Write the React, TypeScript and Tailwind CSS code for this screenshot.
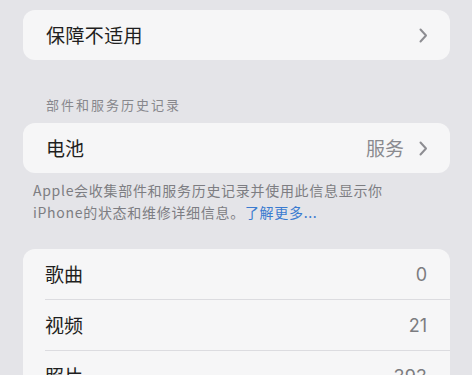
import React from "react";

const Chevron = () => (
  <svg width="9" height="15" viewBox="0 0 9 15" fill="none" className="shrink-0">
    <path d="M1.5 1.5 L7 7.5 L1.5 13.5" stroke="#8d8d92" strokeWidth="2" strokeLinecap="round" strokeLinejoin="round" />
  </svg>
);

export default function App() {
  const font = { fontFamily: '"Noto Sans CJK SC", "Noto Sans", sans-serif' };
  return (
    <div className="w-[472px] h-[375px] overflow-hidden bg-[#e4e4e8] pt-[10px] pl-[23px] pr-[22px]" style={font}>
      <div className="h-[50px] rounded-[12px] bg-[#f6f6f7] flex items-center justify-between pl-[23px] pr-[22px]">
        <span className="text-[19px] tracking-[0.4px] text-[#1f1f21]">保障不适用</span>
        <Chevron />
      </div>

      <div className="pt-[37px] pb-[10px] pl-[23px] text-[13px] leading-[16px] tracking-[2px] text-[#87878c]">
        部件和服务历史记录
      </div>

      <div className="h-[50px] rounded-[12px] bg-[#f6f6f7] flex items-center justify-between pl-[23px] pr-[22px]">
        <span className="text-[19px] text-[#1f1f21]">电池</span>
        <div className="flex items-center gap-[15px]">
          <span className="text-[19px] text-[#8a8a8f]">服务</span>
          <Chevron />
        </div>
      </div>

      <div className="mt-[6px] pl-[10px] text-[14px] leading-[22px] tracking-[0.7px] text-[#7d7d82]">
        Apple会收集部件和服务历史记录并使用此信息显示你
        <br />
        iPhone的状态和维修详细信息。<span className="text-[#3a7bd0]">了解更多...</span>
      </div>

      <div className="mt-[26px] rounded-t-[12px] bg-[#f6f6f7]">
        {[
          ["歌曲", "0"],
          ["视频", "21"],
          ["照片", "393"],
        ].map(([k, v], i) => (
          <div key={k} className="pl-[22px]">
            <div className={`h-[51px] flex items-center justify-between pr-[23px] ${i < 2 ? "border-b border-[#dcdce0]" : ""}`}>
              <span className="text-[19px] text-[#1f1f21]">{k}</span>
              <span className="text-[18px] text-[#7c7c80]" style={{ fontFamily: '"Inter", "Noto Sans", sans-serif' }}>{v}</span>
            </div>
          </div>
        ))}
      </div>
    </div>
  );
}
